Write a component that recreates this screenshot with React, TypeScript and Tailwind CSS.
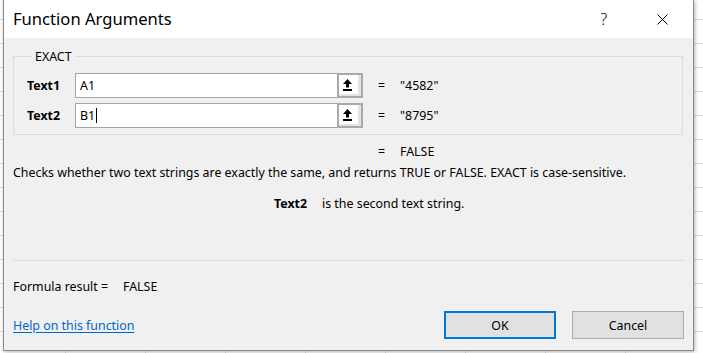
import React from "react";

const COLS = 9;
const ROWS = 15;

function UpArrowButton() {
  return (
    <div className="box-border flex h-[25px] w-[26px] shrink-0 items-start border-2 border-[#a9a9a9] bg-[#e3e3e3]">
      <div className="flex h-[19px] w-[19px] items-start bg-white">
        <svg className="ml-[4px] mt-[4px]" width="9" height="12" viewBox="0 0 9 12">
          <polygon points="4.5,0 9,5 6,5 6,8.5 3,8.5 3,5 0,5" fill="#000" />
          <rect x="0" y="10" width="9" height="2" fill="#000" />
        </svg>
      </div>
    </div>
  );
}

function ArgRow({ label, value, result, caret }: { label: string; value: string; result: string; caret?: boolean }) {
  return (
    <div className="flex h-[25px] items-center">
      <div className="w-[48px] shrink-0 font-bold text-black">{label}</div>
      <div className="box-border flex h-[25px] w-[262px] shrink-0 items-center border border-r-0 border-[#a5a5a5] bg-white pl-[4px] text-black">
        <span>{value}</span>
        {caret && <span className="ml-[1px] h-[15px] w-[1px] bg-black" />}
      </div>
      <UpArrowButton />
      <div className="ml-[15px] w-[22px] shrink-0 text-black">=</div>
      <div className="text-black">{result}</div>
    </div>
  );
}

export default function App() {
  const cells = Array.from({ length: COLS * ROWS }, (_, i) => i);
  return (
    <div
      className="relative h-[353px] w-[703px] overflow-hidden bg-white text-[12.4px] leading-[17px]"
      style={{ fontFamily: "'Noto Sans', 'Open Sans', sans-serif" }}
    >
      {/* spreadsheet grid behind the dialog */}
      <div className="grid grid-cols-[66px_repeat(8,80px)] grid-rows-[20px_repeat(14,24px)]">
        {cells.map((i) => (
          <div key={i} className="box-border border-b border-r border-[#d9d9d9]" />
        ))}
      </div>

      {/* dialog */}
      <div className="absolute left-[3px] top-0 box-border flex h-[351px] w-[691px] flex-col border-x border-b border-[#8a8a8a] bg-[#f0f0f0] shadow-[1px_1px_4px_rgba(0,0,0,0.3)]">
        {/* title bar */}
        <div className="flex h-[38px] shrink-0 items-center bg-white pl-[9px] pr-[8px]">
          <div className="flex-1 text-[16.6px] leading-[22px] text-black">Function Arguments</div>
          <div className="mr-[12px] flex w-[46px] justify-center text-[16px] font-light text-black">?</div>
          <div className="flex w-[46px] justify-center">
            <svg width="11" height="11" viewBox="0 0 11 11">
              <path d="M0.5 0.5 L10.5 10.5 M10.5 0.5 L0.5 10.5" stroke="#000" strokeWidth="1" fill="none" />
            </svg>
          </div>
        </div>

        {/* body */}
        <div className="flex flex-1 flex-col pl-[9px] pr-[9px]">
          <fieldset className="mr-[1px] mt-[10px] border border-[#dcdcdc] pb-[6px] pl-[13px] pt-[8px]">
            <legend className="ml-[5px] px-[3px] text-black">EXACT</legend>
            <div className="flex flex-col gap-[5px]">
              <ArgRow label="Text1" value="A1" result={'"4582"'} />
              <ArgRow label="Text2" value="B1" result={'"8795"'} caret />
            </div>
          </fieldset>

          <div className="mt-[8px] flex text-black">
            <div className="ml-[365px] w-[22px]">=</div>
            <div>FALSE</div>
          </div>

          <div className="mt-[4px] text-black">
            Checks whether two text strings are exactly the same, and returns TRUE or FALSE. EXACT is case-sensitive.
          </div>

          <div className="mt-[14px] flex text-black">
            <div className="ml-[261px] w-[48px] font-bold">Text2</div>
            <div>is the second text string.</div>
          </div>

          <div className="mt-[48px] h-[1px] bg-[#dcdcdc]" />

          <div className="mt-[17px] flex text-black">
            <div className="w-[110px]">Formula result =</div>
            <div>FALSE</div>
          </div>

          <div className="mt-[16px] flex items-center">
            <a href="#" className="flex-1 text-[#0066cc] underline underline-offset-2">
              Help on this function
            </a>
            <button className="box-border h-[28px] w-[112px] border-2 border-[#0078d7] bg-[#e1e1e1] text-black">
              OK
            </button>
            <button className="ml-[16px] box-border h-[28px] w-[112px] border border-[#adadad] bg-[#e1e1e1] text-black">
              Cancel
            </button>
          </div>
        </div>
      </div>
    </div>
  );
}
